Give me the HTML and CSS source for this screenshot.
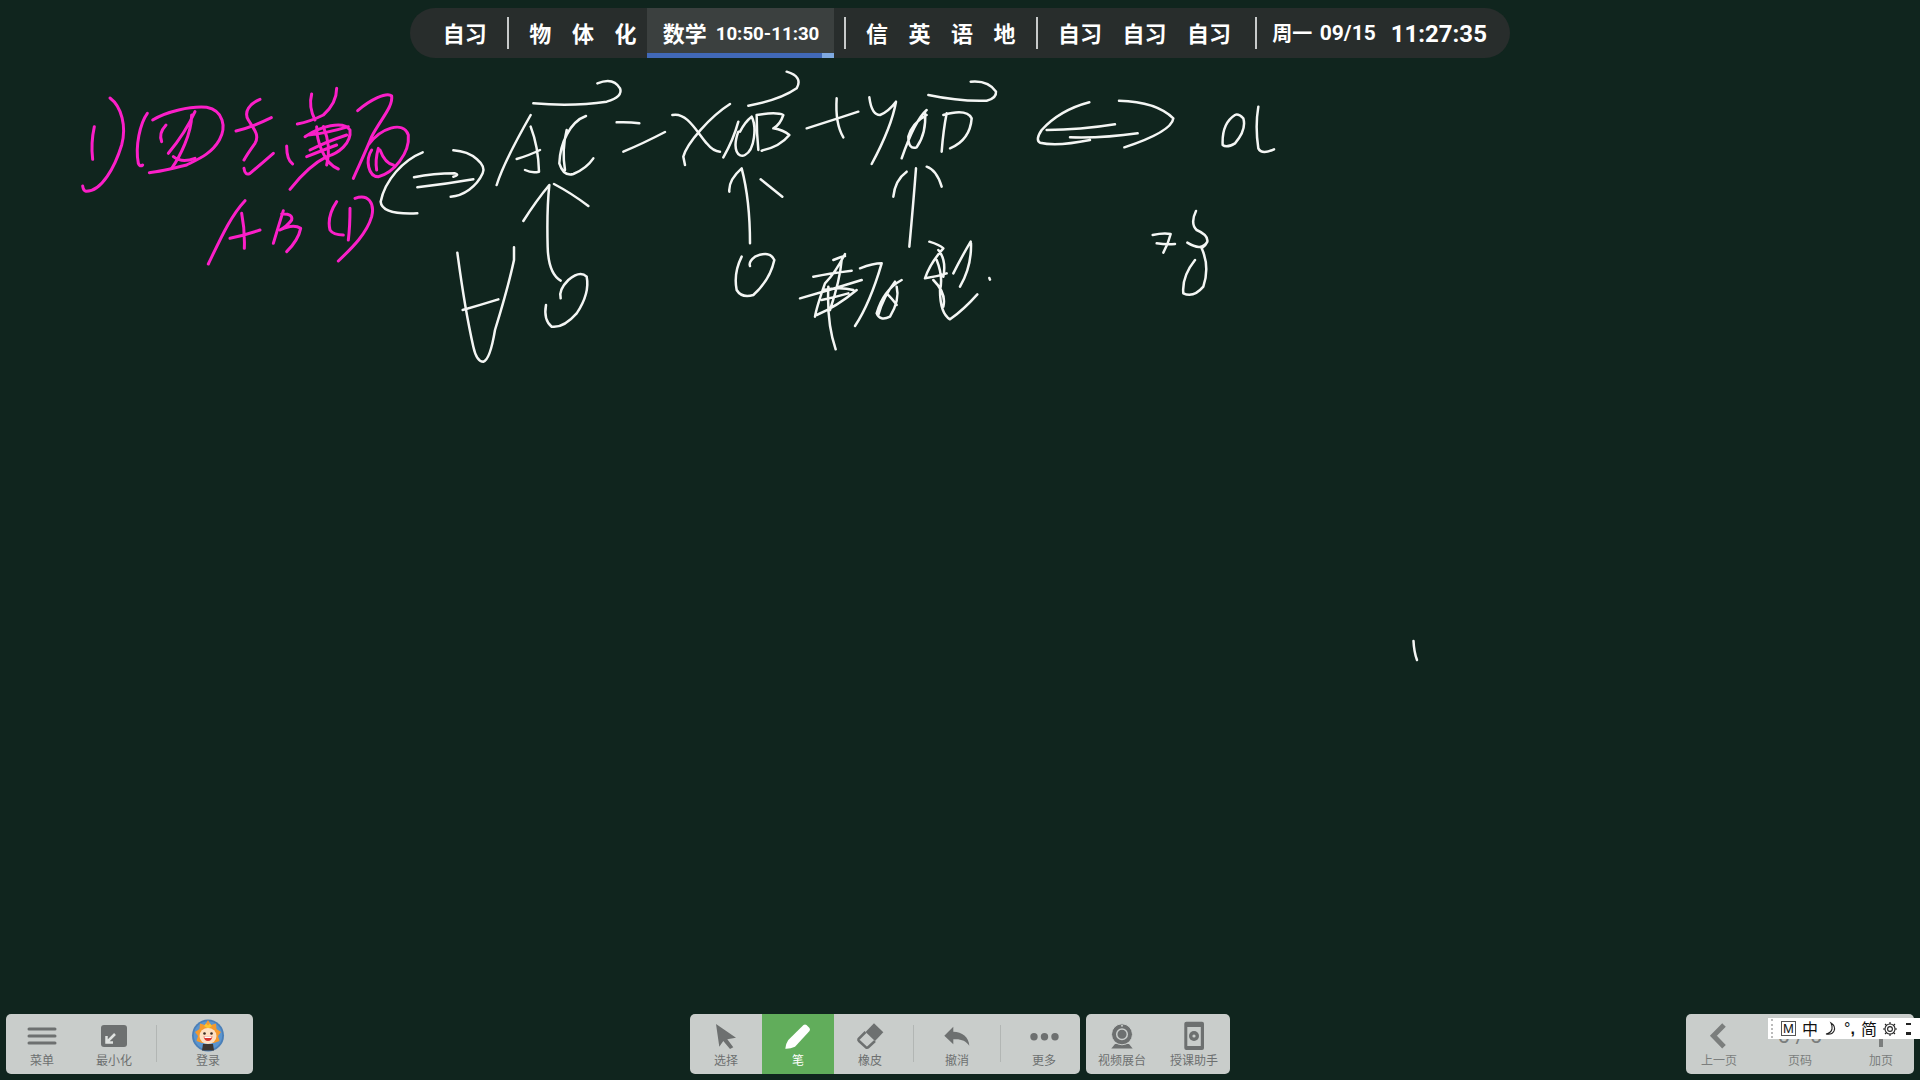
FILE: index.html
```html
<!DOCTYPE html>
<html lang="zh-CN">

<head>
    <meta charset="UTF-8">
    <title>白板</title>
    <link rel="stylesheet" href="styles.css">
</head>

<body>
    <!-- 板书笔迹 -->
    <svg class="ink" width="1920" height="1080" viewBox="0 0 1920 1080">
        <g class="pink" transform="translate(60 70) scale(.33333)">
            <path d="M103 170Q92 220 98 268"/>
            <path d="M150 84C185 110 200 170 185 225C165 290 125 365 78 364Q70 362 68 348"/>
            <path d="M262 130C240 160 225 230 235 280Q240 292 248 285"/>
            <path d="M278 150C320 125 390 108 440 112C490 122 500 170 478 210C455 250 420 265 380 285C340 295 300 305 268 308"/>
            <path d="M318 165Q295 190 305 215M405 125C380 180 350 220 325 250M395 135C395 190 360 260 335 295M340 260Q365 280 405 265"/>
            <path d="M600 88C570 100 550 125 565 150C580 175 600 195 585 220Q560 255 552 270M528 183Q580 170 634 143M640 250Q600 285 570 310Q555 318 552 295"/>
            <path d="M755 72Q745 110 765 150M830 55Q830 100 790 135Q750 155 712 162M680 228Q680 270 698 282M735 200C780 170 850 150 870 180C875 220 835 250 800 260C760 280 720 320 690 358M770 170C770 210 790 280 835 297M745 195Q800 190 865 170M750 240Q800 215 860 195M740 260Q790 240 830 225M790 170Q815 230 800 285"/>
            <path d="M893 122C930 90 980 65 995 78C1000 110 960 150 935 200C915 250 895 290 880 325M925 225C960 175 1030 150 1045 195C1050 250 1000 310 955 320C925 320 915 270 935 240M960 240Q975 280 1000 285M955 235Q945 270 950 300"/>
            <path d="M555 392C510 440 480 510 445 582M510 505Q555 495 600 480M545 430Q555 480 553 535"/>
            <path d="M670 422Q655 470 640 520M665 432Q700 430 695 450Q680 470 660 480Q700 460 722 475Q715 510 680 545"/>
            <path d="M830 395Q800 440 810 480Q820 495 850 495M870 415Q870 470 865 510M885 385C925 370 945 400 935 440C920 490 880 530 835 573"/>
        </g>
        <g class="chalk" transform="translate(60 70) scale(.33333)">
            <path d="M1088 247C1030 270 975 330 962 395Q965 435 1072 430"/>
            <path d="M1062 322Q1120 310 1185 310Q1200 315 1180 320M1072 352Q1160 342 1240 328"/>
            <path d="M1180 241C1240 245 1280 285 1268 310C1250 350 1210 378 1172 380"/>
        </g>
        <g class="chalk" transform="translate(440 60) scale(.33333)">
            <path d="M272 165C235 230 190 310 170 375M230 297Q270 285 300 270M272 200Q295 260 297 335Q275 340 255 330"/>
            <path d="M438 168C390 185 360 250 358 310Q370 350 400 342Q440 325 460 295M380 210Q365 270 375 330"/>
            <path d="M280 130Q400 140 500 125Q550 110 540 85Q520 50 472 70"/>
            <path d="M530 187Q565 185 598 190M550 275Q610 250 675 216"/>
            <path d="M697 165C740 155 770 215 800 250Q820 275 840 275M870 132C810 170 740 250 730 290L735 315"/>
            <path d="M850 292Q880 240 895 185M895 215C875 270 895 295 915 285C945 270 950 200 935 170Q915 185 900 215M950 165Q950 220 955 270M950 165Q1010 155 1030 165Q1020 195 1000 205Q1030 210 1048 225Q1020 260 965 272"/>
            <path d="M925 137Q1020 120 1070 85Q1090 50 1040 35"/>
            <path d="M250 483Q290 420 328 375Q320 450 323 560Q325 640 362 662M342 372Q395 400 445 438"/>
            <path d="M362 715Q355 690 385 660Q420 630 440 650Q450 700 410 760Q370 805 335 800Q310 780 318 735"/>
            <path d="M52 578Q75 750 100 860Q110 905 130 905Q150 900 165 810Q205 680 222 600L222 562M68 750Q120 735 175 718"/>
            <path d="M868 395Q865 360 905 325Q930 420 930 550M962 358L1027 410"/>
            <path d="M905 590Q880 640 890 690Q905 715 940 705Q990 660 1003 600Q990 570 945 590Q925 605 930 618"/>
        </g>
        <g class="chalk" transform="translate(780 60) scale(.33333)">
            <path d="M80 205Q160 180 235 155M170 115Q165 190 190 232"/>
            <path d="M268 112Q275 165 300 165Q325 155 348 125Q335 200 275 312"/>
            <path d="M440 150Q405 180 365 295M435 155Q440 220 410 262Q385 270 385 230Q395 190 440 165M500 160Q490 210 485 275M490 165Q560 145 575 175Q570 240 510 265"/>
            <path d="M445 105Q540 125 620 122Q650 115 648 95Q625 60 572 65"/>
            <path d="M928 127Q840 150 785 210Q765 240 780 248Q830 260 930 240M800 210Q900 210 1005 193M870 232Q970 235 1073 220M1017 122Q1130 125 1180 175Q1175 215 1033 262"/>
            <path d="M1365 165Q1325 190 1328 255Q1340 265 1365 250Q1400 210 1390 175Q1375 160 1365 165M1435 140Q1425 200 1435 265Q1445 285 1482 268"/>
            <path d="M408 325Q400 430 388 560M380 335Q345 360 340 410M440 320Q470 330 485 380"/>
            <path d="M195 582Q165 640 135 670Q110 740 105 770M60 715Q150 690 245 660M100 650Q150 640 215 632M130 690Q180 680 220 690M110 765Q170 740 230 690M145 680Q140 790 167 868M160 600Q185 590 195 588M125 720Q170 710 205 700M185 600Q180 660 150 750"/>
            <path d="M240 625Q280 610 305 610Q270 730 225 798M365 660Q310 690 290 760Q300 785 330 770Q360 720 350 680M345 665Q310 710 295 765M320 700Q340 720 350 735"/>
            <path d="M448 545Q480 555 490 565Q450 610 435 655Q470 650 500 640M475 570Q500 600 490 650M572 545Q545 590 520 640M573 550Q575 620 540 680M470 600Q490 650 480 690Q480 760 510 778Q550 750 592 703M460 660Q500 700 490 740M628 654L630 659"/>
            <path d="M1118 525Q1150 518 1172 522Q1165 550 1150 578M1130 550Q1160 555 1185 552"/>
            <path d="M1248 453Q1230 490 1250 510Q1285 525 1282 545Q1265 575 1222 548M1245 600Q1205 650 1210 700Q1240 715 1270 680Q1290 620 1265 565Q1278 555 1282 545"/>
        </g>
        <path class="chalk" d="M1413.5 641Q1414 652 1417 660"/>
    </svg>

    <!-- 课程表 -->
    <div class="schedule">
        <span class="lesson">自习</span>
        <i class="divider"></i>
        <span class="lesson">物</span>
        <span class="lesson">体</span>
        <span class="lesson">化</span>
        <div class="current">
            <span class="current-name">数学</span>
            <span class="current-time">10:50-11:30</span>
            <div class="progress"><div class="progress-done" style="width: 94%"></div></div>
        </div>
        <i class="divider"></i>
        <span class="lesson">信</span>
        <span class="lesson">英</span>
        <span class="lesson">语</span>
        <span class="lesson">地</span>
        <i class="divider"></i>
        <span class="lesson">自习</span>
        <span class="lesson">自习</span>
        <span class="lesson">自习</span>
        <i class="divider divider-date"></i>
        <span class="date-week">周一</span>
        <span class="date-day">09/15</span>
        <span class="clock">11:27:35</span>
    </div>

    <!-- 底部工具栏 -->
    <div class="toolbar">
        <div class="tool-group group-left">
            <div class="tool">
                <svg class="icon" viewBox="0 0 32 30"><path class="line" d="M3 8H29M3 15H29M3 22H29"/></svg>
                <span>菜单</span>
            </div>
            <div class="tool">
                <svg class="icon" viewBox="0 0 32 30"><rect class="fill" x="3" y="4" width="26" height="22" rx="3"/><path class="arrow-white" d="M17 13L9 21M8.5 15V21.5H15"/></svg>
                <span>最小化</span>
            </div>
            <i class="sep sep-login"></i>
            <div class="tool">
                <svg class="icon" viewBox="0 0 32 30">
                    <circle cx="16" cy="14.5" r="16" fill="#4a7fb8"/>
                    <circle cx="16" cy="14.5" r="14.2" fill="#5b95cf"/>
                    <path fill="#f59a2e" d="M16 -1L19 4L24 2.5L24.5 8L29 11L26 15L27.5 20L22 22H10L4.5 20L6 15L3 11L7.5 8L8 2.5L13 4Z"/>
                    <path fill="#fbc62f" d="M12 5L14 2.5L16 4.5L18 2.5L20 5L16 7.5Z"/>
                    <ellipse cx="16" cy="15" rx="8.5" ry="8" fill="#fde0c2"/>
                    <circle cx="12.5" cy="12.5" r="1.3" fill="#3b2a22"/>
                    <circle cx="19.5" cy="12.5" r="1.3" fill="#3b2a22"/>
                    <path fill="#d9342f" d="M11.5 15.5H20.5Q19.5 20 16 20Q12.5 20 11.5 15.5Z"/>
                    <path fill="#fff" d="M12.5 15.5H19.5V17H12.5Z"/>
                    <path fill="#3d3630" d="M11 23H21L22 29.5H10Z"/>
                </svg>
                <span>登录</span>
            </div>
        </div>

        <div class="tool-center">
            <div class="tool-group">
                <div class="tool">
                    <svg class="icon" viewBox="0 0 32 30"><path class="fill" d="M6 3L26 16.7L17.3 18.3L23.3 26.3L20 28L13.3 20L9.3 25.7Z"/></svg>
                    <span>选择</span>
                </div>
                <div class="tool tool-active">
                    <svg class="icon" viewBox="0 0 32 30"><path fill="#fff" d="M21.5 4Q23 3 24.5 4L27.5 7Q28.5 8.5 27.5 10L13 25.7Q8 28 3.3 27.7Q3.5 23 6.3 19Z"/></svg>
                    <span>笔</span>
                </div>
                <div class="tool">
                    <svg class="icon" viewBox="0 0 32 30"><path class="fill" d="M20 2.3L29.3 11.3L21 20L11.5 11Z"/><path class="outline" d="M11.5 11L4.5 18Q4 19 5 20L12 26.5Q13.5 27 14.5 26L21 20"/></svg>
                    <span>橡皮</span>
                </div>
                <i class="sep"></i>
                <div class="tool">
                    <svg class="icon" viewBox="0 0 32 30"><path class="fill" d="M12.3 5.7L3.3 14.7L12.3 23.3V18.3C19 17.5 25 19.5 28.3 24.7C28 16 21 11 12.3 10.7Z"/></svg>
                    <span>撤消</span>
                </div>
                <i class="sep"></i>
                <div class="tool">
                    <svg class="icon" viewBox="0 0 32 30"><circle class="fill" cx="6" cy="15.7" r="3.7"/><circle class="fill" cx="16.5" cy="15.7" r="3.7"/><circle class="fill" cx="27" cy="15.7" r="3.7"/></svg>
                    <span>更多</span>
                </div>
            </div>
            <div class="tool-group">
                <div class="tool">
                    <svg class="icon" viewBox="0 0 32 30">
                        <path class="fill" d="M9 23H23L26.7 27.5H5.3Z"/>
                        <circle cx="16" cy="13.3" r="10.5" fill="#6d7070" stroke="#c9cdcb" stroke-width="1"/>
                        <circle cx="16" cy="13.3" r="5.3" fill="none" stroke="#c9cdcb" stroke-width="1.5"/>
                        <circle cx="16" cy="4.8" r="1" fill="#c9cdcb"/>
                    </svg>
                    <span>视频展台</span>
                </div>
                <div class="tool">
                    <svg class="icon" viewBox="0 0 32 30">
                        <rect class="fill" x="6.3" y="0.7" width="19.7" height="28.3" rx="2"/>
                        <rect x="9.3" y="6" width="13.5" height="19" fill="#c9cdcb"/>
                        <circle class="fill" cx="16" cy="15" r="5"/>
                        <circle cx="16" cy="15" r="1.6" fill="#c9cdcb"/>
                    </svg>
                    <span>授课助手</span>
                </div>
            </div>
        </div>

        <div class="tool-group group-right">
            <div class="tool tool-page">
                <svg class="icon" viewBox="0 0 32 30"><path class="chevron" d="M21 4L10.400 14.700L21 25.700"/></svg>
                <span>上一页</span>
            </div>
            <div class="tool tool-page">
                <div class="page-num">0 / 0</div>
                <span>页码</span>
            </div>
            <div class="tool tool-page">
                <svg class="icon" viewBox="0 0 32 30"><path class="plus" d="M16 3V26M5 14.5H27"/></svg>
                <span>加页</span>
            </div>
        </div>
    </div>

    <!-- 输入法状态条 -->
    <div class="ime">
        <i class="ime-handle"></i>
        <span class="ime-mode">M</span>
        <span class="ime-text">中</span>
        <svg class="ime-icon" viewBox="0 0 16 16"><path d="M8 2Q13 5 11 10Q9 14 3 13Q8 12 9 8Q9.500 5 8 2Z"/></svg>
        <span class="ime-dot">°<b>,</b></span>
        <span class="ime-text">简</span>
        <svg class="ime-icon" viewBox="0 0 16 16"><circle cx="8" cy="8" r="2.4"/><circle cx="8" cy="8" r="5"/><path d="M8 1V3M8 13V15M1 8H3M13 8H15M3 3L4.500 4.500M11.500 11.500L13 13M13 3L11.500 4.500M4.500 11.500L3 13"/></svg>
        <span class="ime-more"></span>
    </div>
</body>
</html>
```

FILE: styles.css
```css
* {
    margin: 0;
    padding: 0;
    box-sizing: border-box;
}

body {
    position: relative;
    display: flex;
    flex-direction: column;
    justify-content: space-between;
    width: 1920px;
    height: 1080px;
    overflow: hidden;
    background-color: #10251e;
    font-family: "Noto Sans CJK SC", "Noto Sans", sans-serif;
}

.ink {
    position: absolute;
    left: 0;
    top: 0;
}

.ink path {
    fill: none;
    stroke-linecap: round;
    stroke-linejoin: round;
}

.pink path {
    stroke: #fb1fc8;
    stroke-width: 9;
}

.chalk path {
    stroke: #f4f6f4;
    stroke-width: 7.5;
}

path.chalk {
    stroke: #f4f6f4;
    stroke-width: 2.5;
}

.schedule {
    position: relative;
    display: flex;
    align-items: center;
    align-self: center;
    height: 50px;
    margin-top: 8px;
    padding: 0 23px 0 22.5px;
    border-radius: 25px;
    background-color: #282d2c;
    color: #fff;
    font-size: 22px;
    font-weight: 700;
}

.lesson {
    margin: 0 10.25px 2px;
}

.divider {
    width: 2px;
    height: 32px;
    margin: 0 10px;
    background-color: #c8caca;
}

.divider-date {
    margin-left: 14px;
}

.current {
    position: relative;
    display: flex;
    align-items: center;
    align-self: stretch;
    width: 187px;
    padding: 0 0 2px 16px;
    background-color: #3b403f;
}

.current-time {
    margin: 4px 0 0 9px;
    font-family: Roboto, sans-serif;
    font-size: 18.7px;
}

.progress {
    position: absolute;
    left: 0;
    right: 0;
    bottom: 0;
    height: 5px;
    background-color: #7fa9e0;
}

.progress-done {
    height: 100%;
    background-color: #4169b8;
}

.date-week {
    margin: 0 0 2px 5px;
    font-size: 20px;
}

.date-day {
    margin-left: 7.5px;
    font-family: Roboto, sans-serif;
    font-size: 21px;
}

.clock {
    margin: 1px 0 0 15px;
    font-family: Roboto, sans-serif;
    font-size: 24px;
}

.toolbar {
    position: relative;
    display: grid;
    grid-template-columns: 1fr auto 1fr;
    padding: 0 6px 6px;
}

.tool-center {
    display: flex;
    gap: 6px;
}

.tool-group {
    display: flex;
    height: 60px;
    border-radius: 5px;
    overflow: hidden;
    background-color: #c9cdcb;
}

.group-left {
    justify-self: start;
    padding-right: 9px;
}

.group-right {
    justify-self: end;
    gap: 15px;
}

.tool {
    display: flex;
    flex-direction: column;
    align-items: center;
    width: 72px;
    padding-top: 7px;
    color: #6d7070;
    font-size: 12px;
    line-height: 16px;
}

.tool-active {
    background-color: #61ad5b;
    color: #fff;
}

.tool-page {
    width: 66px;
    color: #7b7e7d;
}

.icon {
    width: 32px;
    height: 30px;
    margin-bottom: 1px;
    overflow: visible;
}

.page-num {
    height: 31px;
    font-family: Roboto, sans-serif;
    font-size: 22px;
    line-height: 30px;
    white-space: nowrap;
}

.fill {
    fill: #6d7070;
}

.line {
    fill: none;
    stroke: #6d7070;
    stroke-width: 3;
    stroke-linecap: round;
}

.outline {
    fill: none;
    stroke: #6d7070;
    stroke-width: 2.5;
}

.arrow-white {
    fill: none;
    stroke: #dfe2e0;
    stroke-width: 2.5;
}

.chevron {
    fill: none;
    stroke: #7b7e7d;
    stroke-width: 5;
}

.plus {
    fill: none;
    stroke: #7b7e7d;
    stroke-width: 4;
}

.sep {
    width: 1px;
    height: 37px;
    margin: 11px 7px 0;
    background-color: #b2b6b4;
}

.sep-login {
    margin: 11px 15px 0 6px;
}

.ime {
    position: absolute;
    right: 0;
    top: 1018px;
    display: flex;
    align-items: center;
    width: 152px;
    height: 21px;
    padding-left: 3px;
    background-color: #fff;
    color: #111;
}

.ime-handle {
    width: 3px;
    height: 19px;
    margin-right: 7px;
    border-left: 2px dotted #bbb;
}

.ime-mode {
    width: 15px;
    height: 15px;
    margin-right: 6px;
    border: 1px solid #555;
    font-family: "Liberation Sans", sans-serif;
    font-size: 13px;
    line-height: 13px;
    text-align: center;
}

.ime-text {
    margin-right: 5px;
    font-size: 16px;
    line-height: 21px;
}

.ime-icon {
    width: 16px;
    height: 16px;
    margin-right: 5px;
    fill: none;
    stroke: #222;
    stroke-width: 1.1;
}

.ime-dot {
    width: 14px;
    margin-right: 3px;
    font-family: "Liberation Sans", sans-serif;
    font-size: 16px;
    line-height: 21px;
}

.ime-more {
    width: 5px;
    height: 12px;
    margin-left: 3px;
    border-top: 2px solid #222;
    border-bottom: 3px solid #222;
}
```
